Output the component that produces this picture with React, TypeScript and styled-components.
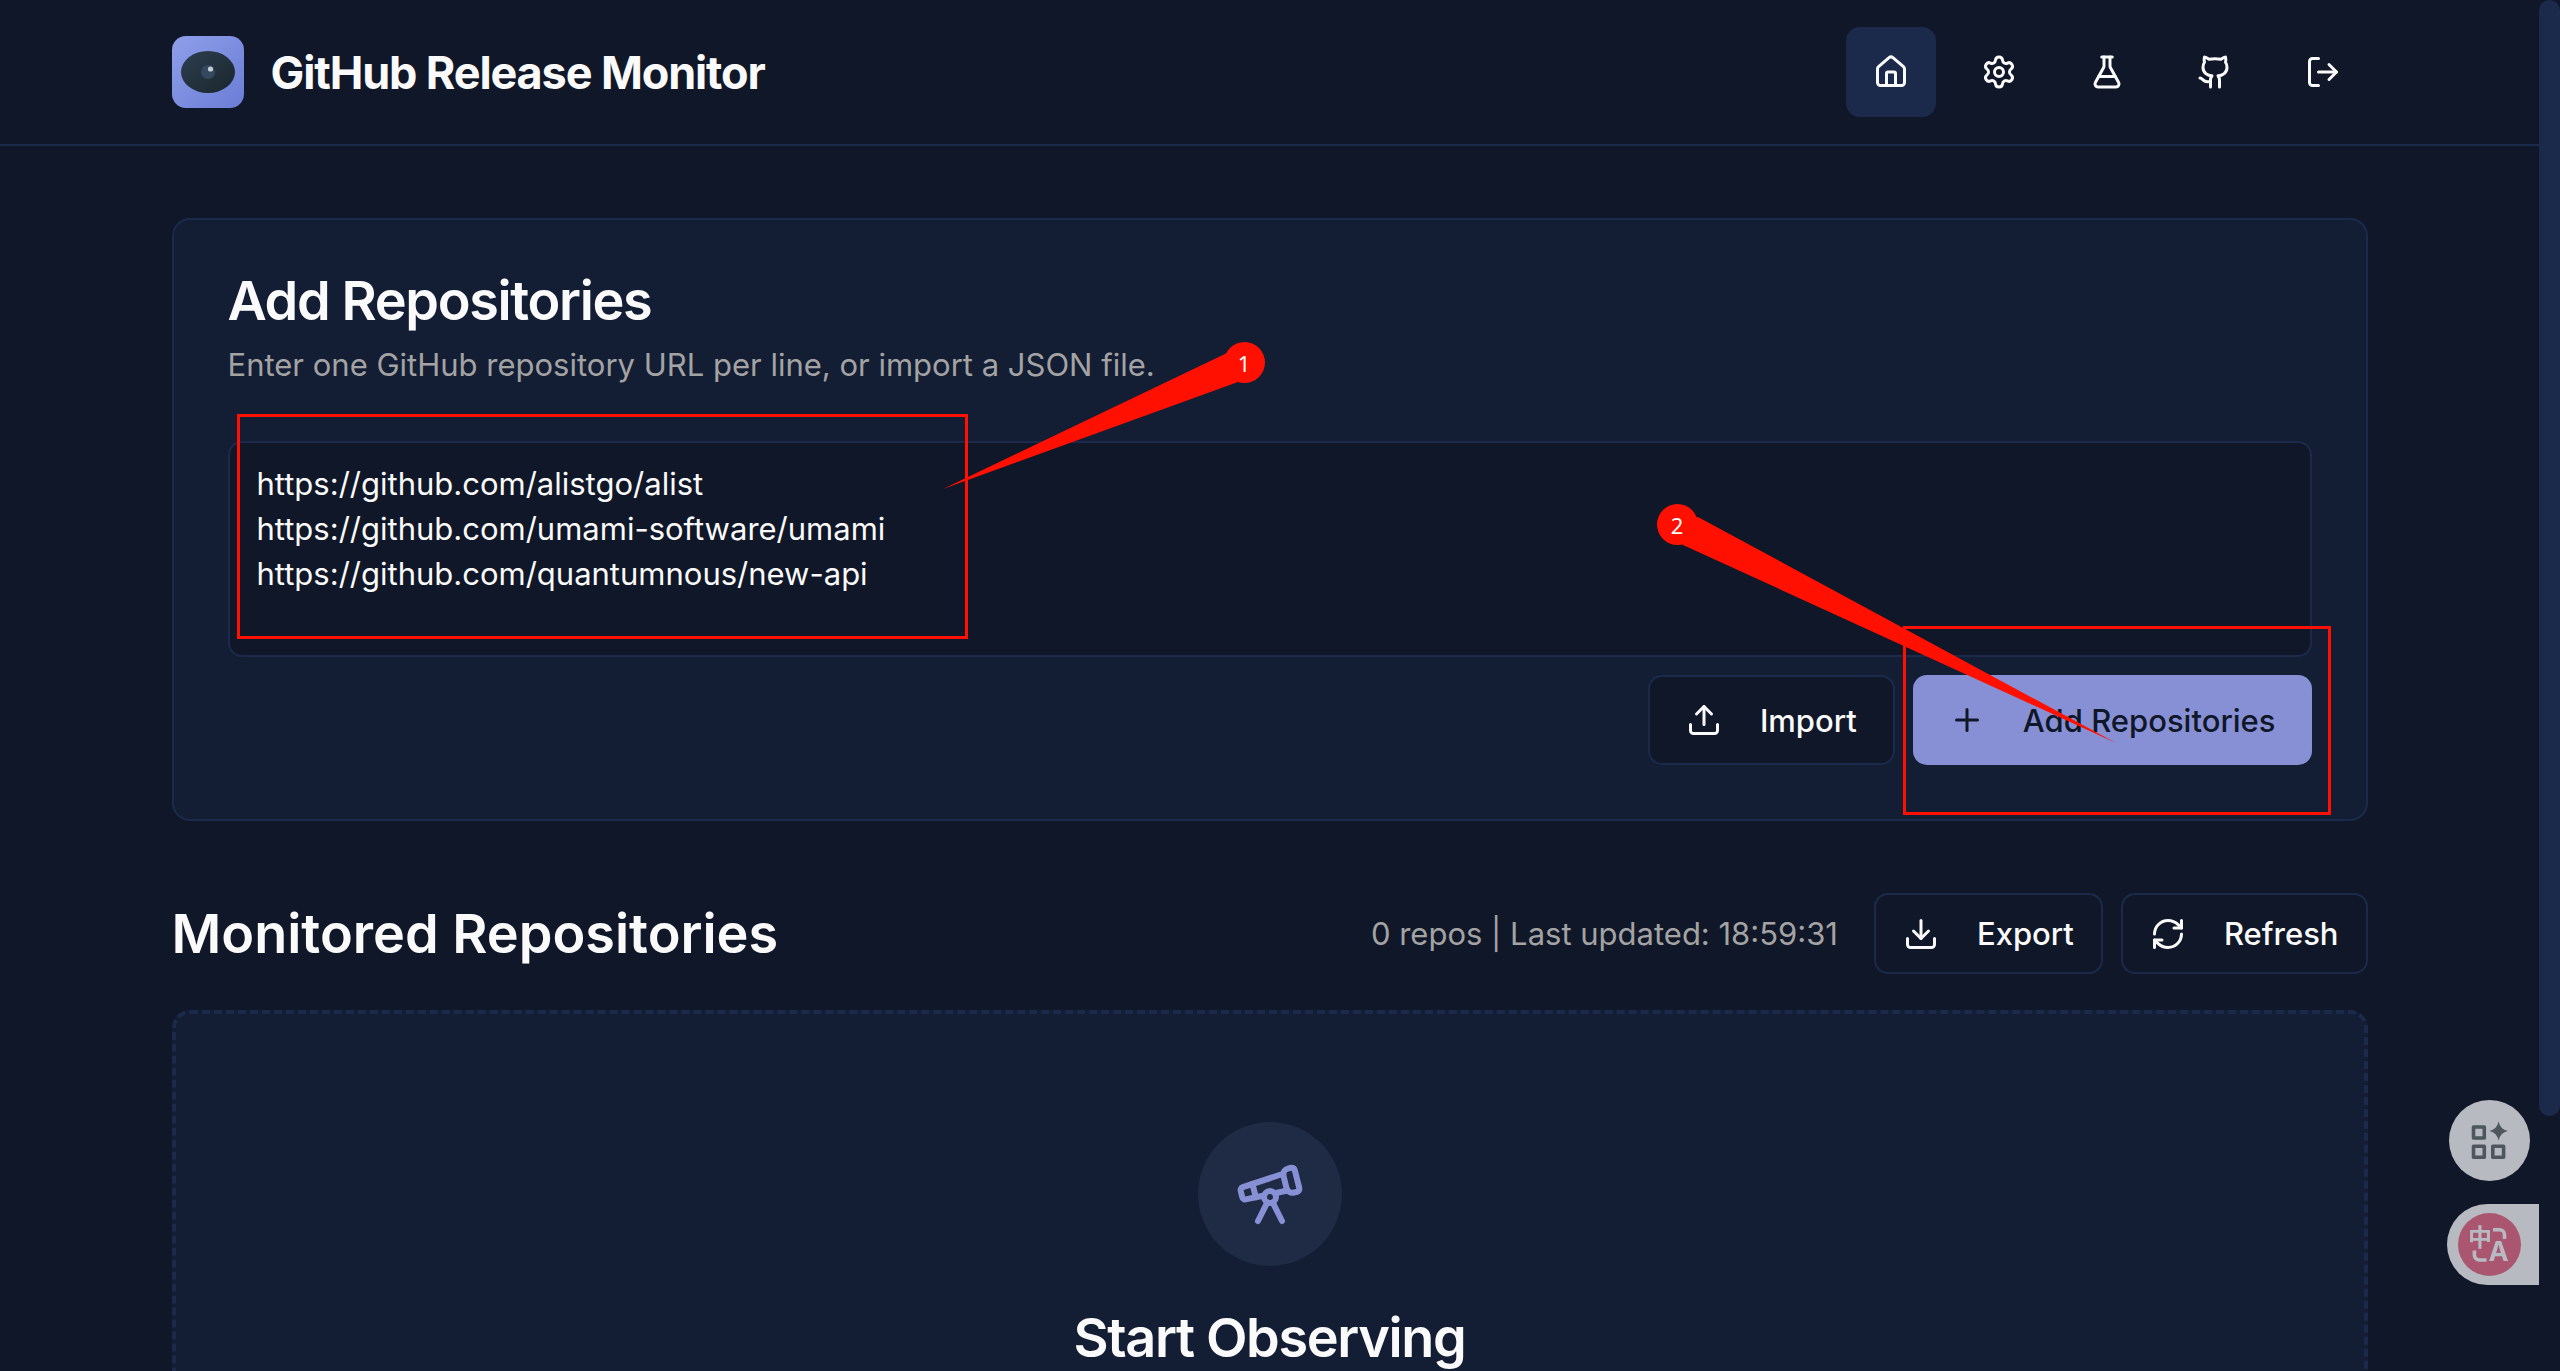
import React, { useState } from "react";
import styled, { createGlobalStyle, css } from "styled-components";
import {
  Download,
  FlaskConical,
  Github,
  House,
  LogOut,
  Plus,
  RefreshCw,
  Settings,
  Telescope,
  Upload,
} from "lucide-react";

const color = {
  background: "#101728",
  card: "#131d34",
  border: "#1b2a4b",
  primary: "#8890d5",
  text: "#fafafa",
  muted: "#a3a3a3",
  halo: "#1f2a44",
  marker: "#ff1000",
  floating: "#b7bbc1",
};

const GlobalStyle = createGlobalStyle`
  *, *::before, *::after { box-sizing: border-box; }
  html, body { margin: 0; overflow: hidden; background: ${color.background}; }
  body {
    color: ${color.text};
    font-family: Inter, "Liberation Sans", sans-serif;
    font-size: 31px;
    line-height: 45px;
  }
  h1, h2, h3, p { margin: 0; }
  button, textarea { font: inherit; color: inherit; }
`;

const Page = styled.div`
  height: 100vh;
  overflow: hidden;
  padding-right: 21px;
`;

const Container = styled.div`
  max-width: 2340px;
  margin: 0 auto;
  padding: 0 72px;
`;

const Header = styled.header`
  border-bottom: 2px solid ${color.border};
`;

const HeaderRow = styled(Container)`
  display: flex;
  align-items: center;
  justify-content: space-between;
  height: 144px;
`;

const Brand = styled.a`
  display: flex;
  align-items: center;
  gap: 27px;
  color: inherit;
  text-decoration: none;
`;

const BrandName = styled.h1`
  font-size: 45px;
  font-weight: 700;
  line-height: 63px;
  letter-spacing: -0.025em;
`;

const Nav = styled.nav`
  display: flex;
  gap: 18px;
`;

const NavButton = styled.button<{ $active?: boolean }>`
  display: grid;
  place-items: center;
  width: 90px;
  height: 90px;
  padding: 0;
  border: 0;
  border-radius: 14px;
  background: ${(p) => (p.$active ? color.border : "transparent")};
  cursor: pointer;
`;

const Main = styled(Container).attrs({ as: "main" })`
  padding-top: 72px;
  padding-bottom: 72px;
`;

const AddCard = styled.section`
  position: relative;
  padding: 54px;
  border: 2px solid ${color.border};
  border-radius: 18px;
  background: ${color.card};
`;

const CardTitle = styled.h2`
  font-size: 54px;
  font-weight: 600;
  line-height: 54px;
  letter-spacing: -0.025em;
`;

const CardHint = styled.p`
  margin-top: 14px;
  color: ${color.muted};
`;

const Form = styled.form`
  display: grid;
  gap: 18px;
  margin-top: 54px;
`;

const UrlBox = styled.textarea`
  display: block;
  width: 100%;
  height: 216px;
  padding: 18px 27px;
  border: 2px solid ${color.border};
  border-radius: 14px;
  background: ${color.background};
  outline: none;
  resize: none;
`;

const Actions = styled.div`
  display: flex;
  justify-content: flex-end;
  gap: 18px;
`;

const Button = styled.button<{ $primary?: boolean; $compact?: boolean }>`
  display: inline-flex;
  align-items: center;
  gap: 38px;
  height: ${(p) => (p.$compact ? "81px" : "90px")};
  padding: 0 ${(p) => (p.$compact ? "27px" : "36px")};
  border: 2px solid ${color.border};
  border-radius: 14px;
  background: ${color.background};
  font-weight: 500;
  white-space: nowrap;
  cursor: pointer;
  ${(p) =>
    p.$primary &&
    css`
      border: 0;
      background: ${color.primary};
      color: ${color.background};
    `}
`;

const ListHeader = styled.div`
  display: flex;
  align-items: center;
  justify-content: space-between;
  margin: 72px 0 36px;
`;

const ListTitle = styled.h2`
  font-size: 54px;
  font-weight: 600;
  line-height: 72px;
`;

const ListTools = styled.div`
  display: flex;
  align-items: center;
  gap: 36px;
`;

const Status = styled.p`
  color: ${color.muted};
`;

const EmptyState = styled.section`
  display: flex;
  flex-direction: column;
  align-items: center;
  padding: 108px 54px;
  border: 4px dashed ${color.border};
  border-radius: 18px;
  background: ${color.card};
`;

const Halo = styled.div`
  display: grid;
  place-items: center;
  width: 144px;
  height: 144px;
  border-radius: 50%;
  background: ${color.halo};
  color: ${color.primary};
`;

const EmptyTitle = styled.h3`
  margin-top: 36px;
  font-size: 54px;
  font-weight: 600;
  line-height: 72px;
  letter-spacing: -0.025em;
`;

const Thumb = styled.div`
  position: fixed;
  top: 0;
  right: 0;
  width: 21px;
  height: 1116px;
  border-radius: 11px;
  background: ${color.border};
`;

const FloatingTools = styled.div`
  position: fixed;
  right: 21px;
  bottom: 86px;
  display: grid;
  justify-items: end;
  gap: 23px;
`;

const RoundTool = styled.button`
  width: 81px;
  height: 81px;
  margin-right: 9px;
  padding: 0;
  border: 0;
  border-radius: 50%;
  background: ${color.floating};
`;

const EdgeTool = styled.button`
  display: flex;
  align-items: center;
  width: 92px;
  height: 81px;
  padding: 0 11px;
  border: 0;
  border-radius: 41px 0 0 41px;
  background: ${color.floating};
`;

const Frame = styled.div`
  position: absolute;
  border: 3px solid ${color.marker};
  pointer-events: none;
`;

const UrlFrame = styled(Frame)`
  top: 194px;
  left: 63px;
  width: 731px;
  height: 225px;
`;

const SubmitFrame = styled(Frame)`
  top: 406px;
  right: 35px;
  width: 428px;
  height: 189px;
`;

const Pointer = styled.svg`
  position: absolute;
  fill: ${color.marker};
  pointer-events: none;
`;

const UrlPointer = styled(Pointer)`
  top: 133px;
  left: 769px;
`;

const SubmitPointer = styled(Pointer)`
  top: 297px;
  right: 250px;
`;

const Badge = styled.span`
  position: absolute;
  display: grid;
  place-items: center;
  width: 41px;
  height: 41px;
  border-radius: 50%;
  background: ${color.marker};
  color: #fff;
  font-family: "Noto Sans", sans-serif;
  font-size: 22px;
  line-height: 30px;
`;

const UrlBadge = styled(Badge)`
  top: 122px;
  left: 1050px;
`;

const SubmitBadge = styled(Badge)`
  top: 284px;
  right: 668px;
`;

function EyeLogo() {
  return (
    <svg width="72" height="72" viewBox="0 0 72 72" aria-hidden="true">
      <defs>
        <linearGradient id="tile" x1="0" y1="0" x2="1" y2="1">
          <stop offset="0" stopColor="#8f9fea" />
          <stop offset="1" stopColor="#6a7dd6" />
        </linearGradient>
        <linearGradient id="eye" x1="0" y1="0" x2="1" y2="1">
          <stop offset="0" stopColor="#2c3e50" />
          <stop offset="1" stopColor="#1b262c" />
        </linearGradient>
      </defs>
      <rect width="72" height="72" rx="14" fill="url(#tile)" />
      <ellipse cx="36" cy="36" rx="27" ry="21" fill="url(#eye)" />
      <circle cx="36" cy="36" r="7" fill="#34495e" />
      <circle cx="38.5" cy="33" r="2.6" fill="#c3ccd3" />
    </svg>
  );
}

function AppsGlyph() {
  return (
    <svg width="81" height="81" viewBox="0 0 81 81" aria-hidden="true">
      <g fill="none" stroke="#4f565d" strokeWidth="3.6" strokeLinejoin="round">
        <rect x="24.5" y="27" width="10.8" height="11" />
        <rect x="24.5" y="46.3" width="10.8" height="11" />
        <rect x="43.8" y="46.3" width="10.8" height="11" />
      </g>
      <path
        d="M49.6 21.6Q51.2 29.4 58.8 31Q51.2 32.6 49.6 40.6Q48 32.6 40.4 31Q48 29.4 49.6 21.6Z"
        fill="#4f565d"
      />
    </svg>
  );
}

function TranslateGlyph() {
  return (
    <svg width="63" height="63" viewBox="0 0 63 63" aria-hidden="true">
      <circle cx="31.5" cy="31.5" r="31.5" fill="#ab5670" />
      <g fill={color.floating} fontWeight="700" textAnchor="middle">
        <text x="22" y="33" fontSize="24" fontFamily='"Noto Sans CJK SC", sans-serif'>
          中
        </text>
        <text x="40.5" y="48" fontSize="27" fontFamily="Inter, sans-serif">
          A
        </text>
      </g>
      <g fill="none" stroke={color.floating} strokeWidth="3.6">
        <path d="M35 16.800h6.500a5 5 0 0 1 5 5V26" />
        <path d="M16.400 37.500v4.500a5 5 0 0 0 5 5H28.500" />
      </g>
    </svg>
  );
}

const navItems = [
  { label: "Home", Icon: House },
  { label: "Settings", Icon: Settings },
  { label: "Test", Icon: FlaskConical },
  { label: "GitHub", Icon: Github },
  { label: "Log out", Icon: LogOut },
];

const initialUrls = [
  "https://github.com/alistgo/alist",
  "https://github.com/umami-software/umami",
  "https://github.com/quantumnous/new-api",
].join("\n");

export default function App() {
  const [urls, setUrls] = useState(initialUrls);
  return (
    <>
      <GlobalStyle />
      <Page>
        <Header>
          <HeaderRow>
            <Brand href="#">
              <EyeLogo />
              <BrandName>GitHub Release Monitor</BrandName>
            </Brand>
            <Nav>
              {navItems.map(({ label, Icon }, i) => (
                <NavButton key={label} type="button" aria-label={label} $active={i === 0}>
                  <Icon size={36} />
                </NavButton>
              ))}
            </Nav>
          </HeaderRow>
        </Header>

        <Main>
          <AddCard>
            <CardTitle>
              <label htmlFor="urls">Add Repositories</label>
            </CardTitle>
            <CardHint id="urls-hint">
              Enter one GitHub repository URL per line, or import a JSON file.
            </CardHint>
            <Form onSubmit={(e) => e.preventDefault()}>
              <UrlBox
                id="urls"
                aria-describedby="urls-hint"
                spellCheck={false}
                value={urls}
                onChange={(e) => setUrls(e.target.value)}
              />
              <Actions>
                <Button type="button">
                  <Upload size={36} />
                  Import
                </Button>
                <Button type="submit" $primary>
                  <Plus size={36} />
                  Add Repositories
                </Button>
              </Actions>
            </Form>
            <UrlFrame />
            <SubmitFrame />
            <UrlPointer width="302" height="136" viewBox="0 0 302 136">
              <path d="M0 136L284 0L302 10L295 29Z" />
            </UrlPointer>
            <UrlBadge>1</UrlBadge>
            <SubmitPointer width="438" height="226" viewBox="0 0 438 226">
              <path d="M438 226L20 0L0 8L5 28Z" />
            </SubmitPointer>
            <SubmitBadge>2</SubmitBadge>
          </AddCard>

          <ListHeader>
            <ListTitle>Monitored Repositories</ListTitle>
            <ListTools>
              <Status>0 repos | Last updated: 18:59:31</Status>
              <Actions>
                <Button type="button" $compact>
                  <Download size={36} />
                  Export
                </Button>
                <Button type="button" $compact>
                  <RefreshCw size={36} />
                  Refresh
                </Button>
              </Actions>
            </ListTools>
          </ListHeader>

          <EmptyState>
            <Halo>
              <Telescope size={72} />
            </Halo>
            <EmptyTitle>Start Observing</EmptyTitle>
          </EmptyState>
        </Main>
      </Page>
      <Thumb />
      <FloatingTools>
        <RoundTool type="button" aria-label="Apps">
          <AppsGlyph />
        </RoundTool>
        <EdgeTool type="button" aria-label="Translate">
          <TranslateGlyph />
        </EdgeTool>
      </FloatingTools>
    </>
  );
}
